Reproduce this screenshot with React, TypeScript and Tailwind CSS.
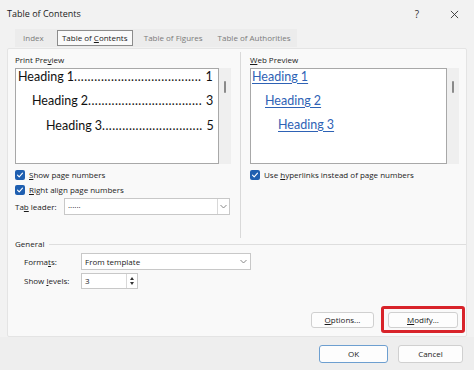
import type React from "react"

const U: React.FC<{ children: React.ReactNode }> = ({ children }) => <span className="underline underline-offset-1">{children}</span>

const Check: React.FC = () => (
    <div className="w-[10px] h-[10px] rounded-[2px] bg-[#1f5fb0] flex items-center justify-center shrink-0">
        <svg width="8" height="8" viewBox="0 0 8 8" fill="none">
            <path d="M1.5 4.2 L3.2 5.8 L6.5 2.2" stroke="white" strokeWidth="1.1" strokeLinecap="round" strokeLinejoin="round" />
        </svg>
    </div>
)

const Chevron: React.FC = () => (
    <svg width="7" height="5" viewBox="0 0 7 5" fill="none">
        <path d="M0.5 1 L3.5 4 L6.5 1" stroke="#7a7a7a" strokeWidth="0.9" />
    </svg>
)

const Scroll: React.FC = () => (
    <div className="w-[12px] bg-[#efefef] flex justify-center pt-[13px] shrink-0">
        <div className="w-[2px] h-[12px] bg-[#8a8a8a] rounded-full" />
    </div>
)

const printRows = [
    { label: "Heading 1", page: "1", indent: "pl-[2px]", dots: 38 },
    { label: "Heading 2", page: "3", indent: "pl-[16px]", dots: 34 },
    { label: "Heading 3", page: "5", indent: "pl-[30px]", dots: 30 },
]

const App: React.FC = () => {
    return (
        <div className="w-[474px] h-[370px] bg-[#f2f2f2] flex flex-col font-['Open_Sans',sans-serif] text-[8px] text-[#1b1b1b] overflow-hidden">
            {/* Title bar */}
            <div className="h-[28px] flex items-center justify-between pl-[7px] pr-[15px] shrink-0">
                <span className="text-[9px] text-[#1a1a1a]">Table of Contents</span>
                <div className="flex items-center gap-[31px] text-[#333]">
                    <span className="text-[10px]">?</span>
                    <svg width="9" height="9" viewBox="0 0 10 10">
                        <path d="M1 1 L9 9 M9 1 L1 9" stroke="#333" strokeWidth="1" />
                    </svg>
                </div>
            </div>

            {/* Tabs */}
            <div className="h-[20px] flex items-center pl-[15px] shrink-0">
                <div className="flex items-center h-[18px] bg-[#ececec] pr-[6px] text-[#7b7b7b] text-[8px]">
                    <span className="px-[8px]">Index</span>
                    <span className="ml-[5px] h-[16px] w-[76px] border border-[#8c8c8c] bg-[#fafafa] text-[#1b1b1b] flex items-center justify-center">
                        <span>Table of <U>C</U>ontents</span>
                    </span>
                    <span className="pl-[11px] pr-[15px]">Table of Figures</span>
                    <span>Table of Authorities</span>
                </div>
            </div>

            {/* Panel */}
            <div className="mx-[7px] h-[289px] bg-[#f9f9f9] border border-[#e4e4e4] rounded-[2px] flex flex-col shrink-0">
                <div className="flex h-[188px] pt-[2px]">
                    {/* Left column */}
                    <div className="w-[232px] pl-[7px] pr-[9px] flex flex-col shrink-0">
                        <span className="h-[16px] flex items-center mt-[1px]">
                            <span>Print Pre<U>v</U>iew</span>
                        </span>
                        <div className="flex h-[96px]">
                            <div className="w-[204px] bg-white border border-[#a8a8a8] font-['Lato',sans-serif] text-[12.5px] text-[#111] pr-[6px] flex flex-col gap-[8.5px]">
                                {printRows.map((r) => (
                                    <div key={r.label} className={`flex items-center h-[16px] whitespace-nowrap ${r.indent}`}>
                                        <span>{r.label}</span>
                                        <span className="flex-1 text-right tracking-[0.4px]">{".".repeat(r.dots)}</span>
                                        <span className="pl-[4px]">{r.page}</span>
                                    </div>
                                ))}
                            </div>
                            <Scroll />
                        </div>
                        <div className="flex items-center gap-[4px] mt-[5px] h-[11px]">
                            <Check />
                            <span><U>S</U>how page numbers</span>
                        </div>
                        <div className="flex items-center gap-[4px] mt-[4px] h-[11px]">
                            <Check />
                            <span><U>R</U>ight align page numbers</span>
                        </div>
                        <div className="flex items-center mt-[3px] h-[17px]">
                            <span className="w-[49px]">Ta<U>b</U> leader:</span>
                            <div className="w-[166px] h-[17px] bg-white border border-[#c8c8c8] flex items-center justify-between">
                                <span className="pl-[3px] -mt-[3px]">......</span>
                                <div className="h-full w-[12px] border-l border-[#d8d8d8] flex items-center justify-center">
                                    <Chevron />
                                </div>
                            </div>
                        </div>
                    </div>

                    {/* Divider */}
                    <div className="w-px bg-[#d9d9d9] h-[186px] mt-[1px] shrink-0" />

                    {/* Right column */}
                    <div className="flex-1 pl-[9px] flex flex-col">
                        <span className="h-[16px] flex items-center mt-[1px]">
                            <span><U>W</U>eb Preview</span>
                        </span>
                        <div className="flex h-[96px]">
                            <div className="w-[197px] bg-white border border-[#a8a8a8] font-['Lato',sans-serif] text-[12.5px] text-[#2e62b5] flex flex-col gap-[8px]">
                                <div className="h-[16px] flex items-center pl-[1px]"><span className="underline underline-offset-2">Heading 1</span></div>
                                <div className="h-[16px] flex items-center pl-[14px]"><span className="underline underline-offset-2">Heading 2</span></div>
                                <div className="h-[16px] flex items-center pl-[27px]"><span className="underline underline-offset-2">Heading 3</span></div>
                            </div>
                            <Scroll />
                        </div>
                        <div className="flex items-center gap-[4px] mt-[5px] h-[11px]">
                            <Check />
                            <span>Use <U>h</U>yperlinks instead of page numbers</span>
                        </div>
                    </div>
                </div>

                {/* General */}
                <div className="flex items-center pl-[7px] h-[12px] mt-[1px]">
                    <span>General</span>
                    <div className="flex-1 h-px bg-[#dedede] ml-[5px]" />
                </div>
                <div className="flex items-center pl-[16px] mt-[3px] h-[17px]">
                    <span className="w-[57px]">Forma<U>t</U>s:</span>
                    <div className="w-[170px] h-[17px] bg-white border border-[#c8c8c8] flex items-center justify-between">
                        <span className="pl-[3px]">From template</span>
                        <div className="pr-[3px] flex items-center"><Chevron /></div>
                    </div>
                </div>
                <div className="flex items-center pl-[16px] mt-[3px] h-[16px]">
                    <span className="w-[57px]">Show <U>l</U>evels:</span>
                    <div className="w-[57px] h-[16px] bg-white border border-[#c8c8c8] flex items-center justify-between">
                        <span className="pl-[3px]">3</span>
                        <div className="h-full w-[11px] border-l border-[#d8d8d8] flex flex-col items-center justify-center gap-[2px]">
                            <div className="w-0 h-0 border-l-[2.5px] border-r-[2.5px] border-b-[3px] border-l-transparent border-r-transparent border-b-[#333]" />
                            <div className="w-0 h-0 border-l-[2.5px] border-r-[2.5px] border-t-[3px] border-l-transparent border-r-transparent border-t-[#333]" />
                        </div>
                    </div>
                </div>

                {/* Options / Modify */}
                <div className="flex-1 flex items-end justify-end pr-[1px] pb-[3px]">
                    <button className="w-[63px] h-[16px] mb-[5px] bg-[#fdfdfd] border border-[#d0d0d0] rounded-[3px] flex items-center justify-center">
                        <span><U>O</U>ptions...</span>
                    </button>
                    <div className="ml-[7px] w-[84px] h-[27px] border-[3px] border-[#d8232a] rounded-[3px] flex items-center justify-center">
                        <button className="w-[70px] h-[16px] bg-[#fdfdfd] border border-[#d0d0d0] rounded-[3px] flex items-center justify-center">
                            <span><U>M</U>odify...</span>
                        </button>
                    </div>
                </div>
            </div>

            {/* Footer */}
            <div className="flex-1 bg-[#eeeeee] flex items-center justify-end pr-[11px] gap-[10px]">
                <button className="w-[69px] h-[18px] bg-[#fdfdfd] border border-[#6d9fd0] rounded-[3px] flex items-center justify-center">
                    OK
                </button>
                <button className="w-[65px] h-[18px] bg-[#fdfdfd] border border-[#d0d0d0] rounded-[3px] flex items-center justify-center">
                    Cancel
                </button>
            </div>
        </div>
    )
}

export default App
